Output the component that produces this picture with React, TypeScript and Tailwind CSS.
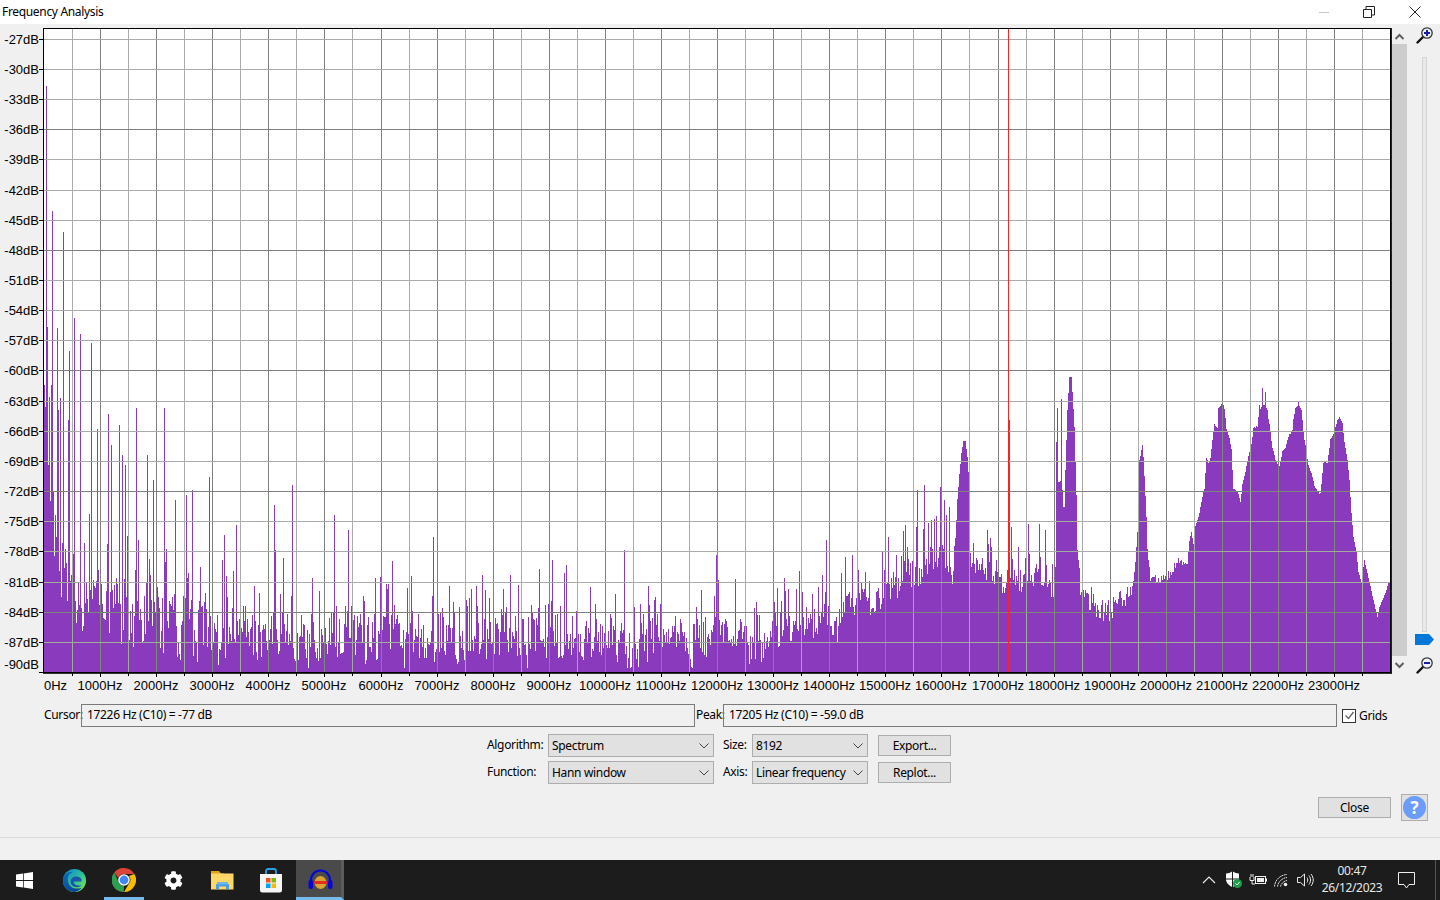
import React from "react";
import { FaCog } from "react-icons/fa";

const uiFont = "font-['Noto_Sans',sans-serif] tracking-[-0.33px]";

// envelope of the spectrum: x, top of the solid part, noise
const envelope: number[][] = [
  [44, 385, 0], [46, 420, 30], [50, 500, 50], [60, 575, 35], [80, 600, 25], [100, 610, 25], [150, 630, 28],
  [200, 640, 25], [300, 650, 22], [400, 640, 25], [500, 645, 22], [600, 648, 20], [700, 652, 15], [800, 640, 12],
  [840, 625, 12], [880, 595, 15], [900, 578, 18], [952, 575, 15], [955, 540, 4], [957, 500, 2], [959, 475, 1],
  [961, 452, 1], [963, 441, 0], [965, 441, 0], [967, 457, 1], [968, 472, 1], [969, 530, 2], [971, 568, 10],
  [1000, 580, 14], [1054, 582, 12], [1055, 567, 0], [1056, 442, 1], [1058, 482, 1], [1060, 480, 1], [1062, 490, 3],
  [1063, 507, 0], [1064, 507, 0], [1065, 470, 1], [1067, 410, 1], [1068, 393, 0], [1069, 377, 0], [1071, 377, 0],
  [1072, 392, 0], [1074, 427, 1], [1076, 495, 1], [1077, 550, 1], [1079, 568, 1], [1080, 592, 3], [1090, 598, 14],
  [1105, 612, 12], [1125, 598, 12], [1132, 587, 6], [1135, 563, 1], [1137, 532, 1], [1138, 500, 1], [1139, 460, 1],
  [1142, 445, 0], [1143, 457, 1], [1146, 517, 1], [1147, 550, 2], [1150, 580, 5], [1165, 578, 5], [1180, 560, 4],
  [1187, 565, 2], [1189, 540, 1], [1191, 532, 1], [1193, 545, 1], [1195, 525, 1], [1198, 517, 1], [1201, 502, 2],
  [1204, 488, 1], [1206, 458, 1], [1208, 462, 2], [1210, 458, 1], [1212, 440, 1], [1214, 424, 1], [1217, 428, 1],
  [1218, 408, 1], [1222, 403, 0], [1224, 408, 1], [1226, 428, 1], [1228, 435, 1], [1231, 448, 1], [1232, 470, 1],
  [1233, 488, 1], [1238, 493, 1], [1240, 502, 1], [1242, 485, 1], [1245, 472, 1], [1248, 457, 1], [1251, 445, 1],
  [1253, 428, 2], [1257, 427, 2], [1259, 408, 3], [1265, 405, 3], [1267, 410, 1], [1269, 425, 2], [1272, 448, 1],
  [1275, 460, 1], [1279, 467, 1], [1282, 452, 1], [1285, 448, 1], [1288, 437, 1], [1292, 428, 2], [1295, 408, 3],
  [1297, 403, 3], [1301, 410, 3], [1303, 433, 2], [1306, 452, 1], [1308, 465, 1], [1312, 477, 1], [1315, 490, 2],
  [1320, 493, 2], [1323, 462, 1], [1327, 463, 1], [1330, 440, 1], [1333, 435, 1], [1337, 420, 0], [1339, 417, 0],
  [1342, 423, 0], [1344, 442, 0], [1347, 460, 0], [1349, 480, 0], [1351, 513, 0], [1353, 537, 0], [1356, 552, 1],
  [1358, 572, 1], [1361, 583, 1], [1364, 560, 1], [1367, 573, 1], [1370, 587, 1], [1373, 600, 1], [1377, 617, 1],
  [1379, 607, 1], [1382, 600, 0], [1385, 593, 0], [1388, 583, 0], [1390, 583, 0],
];

// the tallest spikes, read off the picture
const spikes: Record<number, number> = {
  46: 86, 47: 327, 49: 397, 51: 385, 52: 211, 57: 328, 58: 410, 60: 398, 63: 232, 68: 420, 69: 351, 74: 318, 80: 334,
  91: 343, 97: 429, 108: 414, 111: 445, 119: 425, 122: 455, 125: 465, 136: 408, 147: 455, 153: 480, 164: 408,
  175: 500, 186: 495, 192: 490, 209: 477, 224: 535, 236: 525, 268: 493, 274: 505, 292: 485, 334: 515, 348: 530,
  433: 537, 552: 560, 624: 550, 716: 555, 826: 540, 905: 525, 917: 490, 924: 485, 931: 520, 940: 487, 946: 515,
  1009: 420, 1011: 527, 1028: 524, 1039: 524, 1045: 530,
  1057: 408, 1061: 399, 1262: 388, 1265: 392,
};

const buildBars = () => {
  let seed = 20231226;
  const rand = () => {
    seed = (seed + 0x6d2b79f5) | 0;
    let t = Math.imul(seed ^ (seed >>> 15), 1 | seed);
    t = (t + Math.imul(t ^ (t >>> 7), 61 | t)) ^ t;
    return ((t ^ (t >>> 14)) >>> 0) / 4294967296;
  };
  let d = "";
  let i = 0;
  let cluster = 0;
  let clusterEnd = 0;
  for (let x = 44; x < 1390; x++) {
    while (envelope[i + 1][0] <= x && i < envelope.length - 2) i++;
    const [x0, y0, a0] = envelope[i];
    const [x1, y1, a1] = envelope[i + 1];
    const k = Math.min(1, (x - x0) / (x1 - x0));
    const base = y0 + (y1 - y0) * k;
    const amp = a0 + (a1 - a0) * k;
    let top = base + (rand() - 0.5) * 2 * amp;
    if (x >= clusterEnd) {
      cluster = (rand() - 0.55) * 22;
      clusterEnd = x + 3 + Math.floor(rand() * 8);
    }
    // low end is ragged: clumps of bars with thin spikes above them
    if (x > 60 && x < 950) {
      top = base - 6 + (rand() - 0.5) * 2.2 * amp + cluster;
      if (rand() < 0.2) top -= 15 + rand() * (x < 300 ? 60 : 35);
    }
    if (x > 970 && x < 1054) {
      top += cluster * 0.6;
      if (rand() < 0.18) top -= 10 + rand() * 25;
    }
    if (spikes[x]) top = spikes[x];
    top = Math.min(668, Math.round(top));
    d += `M${x} ${top}h1V672h-1z`;
  }
  return d;
};

const bars = buildBars();

const dbTicks = [
  [-27, 39], [-30, 69], [-33, 99], [-36, 129], [-39, 159], [-42, 190], [-45, 220], [-48, 250], [-51, 280], [-54, 310],
  [-57, 340], [-60, 370], [-63, 401], [-66, 431], [-69, 461], [-72, 491], [-75, 521], [-78, 551], [-81, 582], [-84, 612],
  [-87, 642],
];
const isMajorDb = (db: number) => db % 12 === 0;
const hzLines = Array.from({ length: 47 }, (_, i) => i + 1).map((n) => ({ x: Math.round(44 + n * 28.045), major: n % 2 === 0, n }));

const Grid = ({ light, dark }: { light: string; dark: string }) => (
  <g shapeRendering="crispEdges">
    {hzLines.map((l) => (
      <line key={l.n} x1={l.x + 0.5} x2={l.x + 0.5} y1={29} y2={672} stroke={l.major ? dark : light} />
    ))}
    {dbTicks.map(([db, y]) => (
      <line key={db} x1={44} x2={1390} y1={y + 0.5} y2={y + 0.5} stroke={isMajorDb(db) ? dark : light} />
    ))}
  </g>
);

const Spectrum = () => (
  <svg width={1392} height={676} viewBox="0 24 1392 676" className="block shrink-0">
    <defs>
      <clipPath id="barsClip">
        <path d={bars} />
      </clipPath>
    </defs>
    <rect x={44} y={29} width={1346} height={643} fill="#fff" />
    <Grid light="#ababab" dark="#808080" />
    <path d={bars} fill="#8a3abd" shapeRendering="crispEdges" />
    {/* grid turns a little green where it runs over the purple */}
    <g clipPath="url(#barsClip)">
      <Grid light="#a3ab9c" dark="#7e8878" />
    </g>
    <line x1={1008.5} x2={1008.5} y1={29} y2={672} stroke="#ff2020" shapeRendering="crispEdges" />
    <g shapeRendering="crispEdges" stroke="#000">
      <rect x={43.5} y={28.5} width={1347} height={644} fill="none" />
      <line x1={1391} x2={1391} y1={28} y2={674} stroke="#222" />
      <line x1={43} x2={1391} y1={673.5} y2={673.5} stroke="#333" />
      {dbTicks.map(([db, y]) => (
        <line key={db} x1={39} x2={44} y1={y + 0.5} y2={y + 0.5} />
      ))}
      <line x1={39} x2={44} y1={672.5} y2={672.5} />
      {hzLines.map((l) => (
        <line key={l.n} x1={l.x + 0.5} x2={l.x + 0.5} y1={673} y2={l.major ? 677 : 676} />
      ))}
    </g>
    <g fontFamily="'Liberation Sans', Arial, sans-serif" fontSize={13} fill="#000" letterSpacing={0}>
      {dbTicks.map(([db, y]) => (
        <text key={db} x={39} y={y + 5} textAnchor="end">{db}dB</text>
      ))}
      <text x={39} y={669} textAnchor="end">-90dB</text>
      <text x={44} y={690}>0Hz</text>
      {Array.from({ length: 23 }, (_, i) => i + 1).map((k) => (
        <text key={k} x={Math.round(44 + k * 56.09)} y={690} textAnchor="middle">{k * 1000}Hz</text>
      ))}
    </g>
  </svg>
);

const Chevron = ({ dir }: { dir: "up" | "down" }) => (
  <svg width={15} height={16} viewBox="0 0 15 16" className="block">
    <path d={dir === "up" ? "M3.5 10 7.5 6l4 4" : "M3.5 6l4 4 4-4"} stroke="#606060" strokeWidth={2} fill="none" />
  </svg>
);

const Magnifier = ({ minus }: { minus?: boolean }) => (
  <svg width={18} height={18} viewBox="0 0 18 18" className="block">
    <path d="M1.5 16.5 7 11" stroke="#111" strokeWidth={2.4} strokeLinecap="round" />
    <circle cx={11} cy={7} r={5.2} fill="#eef0fb" stroke="#333" strokeWidth={1.3} />
    <rect x={8} y={6} width={6} height={2} fill="#1a1aa8" />
    {!minus && <rect x={10} y={4} width={2} height={6} fill="#1a1aa8" />}
  </svg>
);

const ComboBox = ({ value, className }: { value: string; className: string }) => (
  <div className={`flex h-[23px] items-center justify-between border border-[#adadad] bg-[#e1e1e1] pl-[3px] pr-[4px] ${className}`}>
    <span className="whitespace-nowrap text-[12px] leading-none text-black">{value}</span>
    <svg width={10} height={6} viewBox="0 0 10 6" className="shrink-0">
      <path d="M.5.5 5 5 9.500.500" stroke="#444" fill="none" />
    </svg>
  </div>
);

const PushButton = ({ label, className }: { label: string; className: string }) => (
  <div className={`flex items-center justify-center border border-[#adadad] bg-[#e1e1e1] text-[12px] leading-none text-black ${className}`}>
    {label}
  </div>
);

const ReadOut = ({ value, className }: { value: string; className: string }) => (
  <div className={`flex h-[23px] items-center border border-[#7a7a7a] pb-[2px] pl-[5px] text-[12px] leading-none text-black ${className}`}>
    {value}
  </div>
);

const WindowsLogo = () => (
  <svg width={17} height={17} viewBox="0 0 18 18">
    <path fill="#fff" d="M0 2.600 7.400 1.600v7H0zM8.200 1.500 18 0v8.600H8.200zM0 9.400h7.400v7L0 15.400zM8.200 9.400H18V18L8.200 16.500z" />
  </svg>
);

const EdgeLogo = () => (
  <svg width={25} height={25} viewBox="0 0 26 26">
    <defs>
      <linearGradient id="edgeGreen" x1="0.2" y1="0" x2="1" y2="0.8">
        <stop offset="0" stopColor="#0f8ccf" />
        <stop offset="0.55" stopColor="#2fc29a" />
        <stop offset="1" stopColor="#7de05a" />
      </linearGradient>
      <linearGradient id="edgeBlue" x1="0" y1="0" x2="0.8" y2="1">
        <stop offset="0" stopColor="#0c6fb8" />
        <stop offset="1" stopColor="#0a3f8c" />
      </linearGradient>
    </defs>
    <circle cx={13} cy={13} r={12} fill="url(#edgeGreen)" />
    <path fill="url(#edgeBlue)" d="M1 13C1 7 6 3 11 4.500 6.500 6 5 10 6.500 15c1.500 5 7 8 14 5.500C17.500 24 14 25 13 25 6 25 1 20 1 13z" />
    <path fill="#1a56a5" d="M9 14c0-4 4-6 8-5 3 1 4 3 3 5h-8c0 3 3 5 9 4-3 3-12 3-12-4z" />
  </svg>
);

const ChromeLogo = () => (
  <svg width={24} height={24} viewBox="0 0 24 24">
    <path fill="#db4437" d="M12 0a12 12 0 0 1 10.400 6H12a6 6 0 0 0-5.700 4L2.300 4.400A12 12 0 0 1 12 0z" />
    <path fill="#fbbc05" d="M22.400 6A12 12 0 0 1 12 24l5-8.500A6 6 0 0 0 17 8z" />
    <path fill="#2f9e4f" d="M2.300 4.400 7.200 15.500A6 6 0 0 0 12 18l-.2 6A12 12 0 0 1 2.300 4.400z" />
    <circle cx={12} cy={12} r={5.800} fill="#fff" />
    <circle cx={12} cy={12} r={4.400} fill="#4285f4" />
  </svg>
);

const FolderLogo = () => (
  <svg width={23} height={20} viewBox="0 0 23 20">
    <path fill="#e0a21c" d="M0 1h8l2 2.500h3V6H0z" />
    <rect y={3.500} width={22.500} height={16} fill="#ffd768" />
    <path fill="#4a9fe0" d="M5 14h13v5h-3v-2.500H8V19H5z" />
    <rect x={6} y={12} width={11} height={2.500} fill="#6fb6ea" />
  </svg>
);

const StoreLogo = () => (
  <svg width={24} height={25} viewBox="0 0 24 25">
    <path d="M7 7V3a2 2 0 0 1 2-2h6a2 2 0 0 1 2 2v4" stroke="#2aa0e6" strokeWidth={1.800} fill="none" />
    <path fill="#f5f5f5" d="M1 6h22v16a2.500 2.500 0 0 1-2.500 2.500h-17A2.500 2.500 0 0 1 1 22z" />
    <rect x={7} y={10} width={4.500} height={4.500} fill="#f25022" />
    <rect x={12.500} y={10} width={4.500} height={4.500} fill="#7fba00" />
    <rect x={7} y={15.500} width={4.500} height={4.500} fill="#00a4ef" />
    <rect x={12.500} y={15.500} width={4.500} height={4.500} fill="#ffb900" />
  </svg>
);

const AudacityLogo = () => (
  <svg width={25} height={22} viewBox="0 0 25 22">
    <path d="M3 14V11a9.500 9.500 0 0 1 19 0v3" stroke="#0505d8" strokeWidth={2.200} fill="none" />
    <rect x={.5} y={11} width={4.500} height={9} rx={2} fill="#0505d8" />
    <rect x={20} y={11} width={4.500} height={9} rx={2} fill="#0505d8" />
    <ellipse cx={12.500} cy={13.500} rx={6} ry={6.500} fill="#d9a233" />
    <path d="M6 13.500h13" stroke="#e0301a" strokeWidth={3} />
  </svg>
);

const TrayIcons = () => (
  <div className="flex items-center">
    <svg width={16} height={16} viewBox="0 0 16 16" className="mr-[8px]">
      <path d="M2 11 8 5l6 6" stroke="#e8e8e8" strokeWidth={1.200} fill="none" />
    </svg>
    <svg width={18} height={18} viewBox="0 0 18 18" className="mr-[6px]">
      <path fill="#fff" d="M1 2.500C4 2.500 6 1.500 7.500 0 9 1.500 11 2.500 14 2.500V8c0 4-3 6.500-6.500 8C4 14.500 1 12 1 8z" />
      <path d="M7.500 0v16M1 8h13" stroke="#1c1c1c" />
      <circle cx={12.500} cy={12.500} r={4.500} fill="#1e9e4a" />
      <path d="M10.500 12.500l1.500 1.500 2.500-3" stroke="#fff" fill="none" />
    </svg>
    <svg width={18} height={12} viewBox="0 0 18 12" className="mr-[7px]">
      <path d="M1 3v3.500h4V3M3 6.500V10h3M2 0v3M4 0v3" stroke="#eee" fill="none" />
      <rect x={6.500} y={2.500} width={10} height={7} stroke="#eee" fill="none" />
      <rect x={8} y={4} width={7} height={4} fill="#eee" />
      <rect x={17} y={4.500} width={1} height={3} fill="#eee" />
    </svg>
    <svg width={15} height={14} viewBox="0 0 15 14" className="mr-[8px]">
      <path d="M.5 13.500C1 7 6 2 13 1.500M3.500 13.500C4 9 8 5 13 4.500M6.500 13.500C7 11 9.500 8 13 7.500" stroke="#ddd" strokeDasharray="2 .6" fill="none" />
      <circle cx={11.500} cy={11.500} r={1.800} fill="#eee" />
    </svg>
    <svg width={17} height={14} viewBox="0 0 17 14">
      <path d="M.5 4.500h3L7.500 1v12l-4-3.500h-3z" stroke="#e8e8e8" fill="none" />
      <path d="M10 4.500c1 1.500 1 3.500 0 5M12 2.500c2 3 2 6 0 9M14 1c3 4 3 8 0 12" stroke="#e8e8e8" fill="none" />
    </svg>
  </div>
);

export default function App() {
  return (
    <div className={`flex h-[900px] w-[1440px] flex-col overflow-hidden bg-[#f0f0f0] ${uiFont}`}>
      {/* title bar */}
      <div className="flex h-6 shrink-0 items-center justify-between bg-white pl-[2px]">
        <span className="text-[12px] leading-none text-black">Frequency Analysis</span>
        <div className="flex items-center">
          <div className="mr-[34px] h-px w-[10px] bg-[#c8c8c8]" />
          <svg width={12} height={12} viewBox="0 0 12 12" className="mr-[34px]">
            <path d="M.5 3.500h8v8h-8zM3 3V.5h8.500V9H9" stroke="#222" fill="none" />
          </svg>
          <svg width={12} height={12} viewBox="0 0 12 12" className="mr-[19px]">
            <path d="M.5.500l11 11M11.500.500l-11 11" stroke="#222" fill="none" />
          </svg>
        </div>
      </div>

      {/* plot with scrollbar and zoom slider */}
      <div className="flex h-[676px] shrink-0">
        <Spectrum />
        <div className="mt-[4px] flex h-[652px] w-[15px] flex-col">
          <div className="h-4 shrink-0 pt-px"><Chevron dir="up" /></div>
          <div className="h-[612px] bg-[#cdcdcd]" />
          <div className="mt-px h-4 shrink-0"><Chevron dir="down" /></div>
        </div>
        <div className="flex flex-1 flex-col items-center pl-[2px] pt-[2px]">
          <Magnifier />
          <div className="mb-[2px] mt-[13px] h-[575px] w-[5px] border border-[#d4d4d4] bg-[#e7eae7]" />
          <svg width={19} height={11} viewBox="0 0 19 11" className="block shrink-0">
            <path fill="#0078d7" d="M0 0h14l5 5.500L14 11H0z" />
          </svg>
          <div className="mt-[11px]"><Magnifier minus /></div>
        </div>
      </div>

      {/* cursor and peak readouts */}
      <div className="mt-[4px] flex h-[23px] shrink-0 items-center pl-[44px] text-[12px] leading-none text-black">
        <span className="w-[37px] pb-[2px]">Cursor:</span>
        <ReadOut value="17226 Hz (C10) = -77 dB" className="w-[614px]" />
        <span className="w-[28px] pb-[2px] pl-[1px]">Peak:</span>
        <ReadOut value="17205 Hz (C10) = -59.0 dB" className="w-[614px]" />
        <div className="ml-[5px] flex h-[14px] w-[14px] items-center justify-center border border-[#333] bg-white">
          <svg width={11} height={11} viewBox="0 0 11 11">
            <path d="M1.500 5.500 4.500 8.500 9.500 2" stroke="#666" strokeWidth={1.400} fill="none" />
          </svg>
        </div>
        <span className="ml-[3px]">Grids</span>
      </div>

      {/* algorithm, size, function, axis */}
      <div className="mt-[7px] flex shrink-0 flex-col gap-[4px] pl-[487px] text-[12px] leading-none text-black">
        <div className="flex h-[23px] items-center">
          <span className="w-[61px] pb-[2px]">Algorithm:</span>
          <ComboBox value="Spectrum" className="w-[166px]" />
          <span className="ml-[9px] w-[29px] pb-[2px]">Size:</span>
          <ComboBox value="8192" className="w-[116px]" />
          <PushButton label="Export..." className="ml-[10px] h-[21px] w-[73px]" />
        </div>
        <div className="flex h-[23px] items-center">
          <span className="w-[61px] pb-[2px]">Function:</span>
          <ComboBox value="Hann window" className="w-[166px]" />
          <span className="ml-[9px] w-[29px] pb-[2px]">Axis:</span>
          <ComboBox value="Linear frequency" className="w-[116px]" />
          <PushButton label="Replot..." className="ml-[10px] h-[21px] w-[73px]" />
        </div>
      </div>

      {/* close and help */}
      <div className="mt-[10px] flex h-[27px] shrink-0 items-center justify-end pr-[12px]">
        <PushButton label="Close" className="h-[21px] w-[73px]" />
        <div className="ml-[10px] flex h-[27px] w-[27px] items-center justify-center border border-[#adadad] bg-[#e1e1e1]">
          <div className="flex h-[23px] w-[23px] items-center justify-center rounded-full bg-[#6c9cf9] text-[17px] font-bold leading-none text-white">?</div>
        </div>
      </div>

      {/* status strip */}
      <div className="mt-[16px] h-[23px] shrink-0 border-t border-[#d9d9d9] bg-[#f1f1f1]" />

      {/* taskbar */}
      <div className="flex h-10 shrink-0 items-stretch bg-[#1c1c1c]">
        <div className="flex w-[48px] items-center justify-center"><WindowsLogo /></div>
        <div className="flex w-[52px] items-center justify-center"><EdgeLogo /></div>
        <div className="mx-[4px] flex w-[40px] items-center justify-center border-b-[3px] border-[#76b9ed] pt-[3px]"><ChromeLogo /></div>
        <div className="flex w-[50px] items-center justify-center"><FaCog className="text-[19px] text-white" /></div>
        <div className="flex w-[48px] items-center justify-center"><FolderLogo /></div>
        <div className="flex w-[50px] items-center justify-center"><StoreLogo /></div>
        <div className="flex w-[48px] items-center justify-center border-b-[3px] border-r-[3px] border-b-[#76b9ed] border-r-[#5c5c5c] bg-[#4a4a4a] pt-[3px] pl-[3px]"><AudacityLogo /></div>
        <div className="flex flex-1 items-center justify-end">
          <TrayIcons />
          <div className="ml-[3px] flex w-[70px] flex-col items-center gap-[3px] pb-px text-[12px] leading-[14px] text-[#e8e8e8]">
            <span>00:47</span>
            <span>26/12/2023</span>
          </div>
          <svg width={18} height={17} viewBox="0 0 18 17" className="ml-[11px] mr-[19px]">
            <path d="M.5.5h16v12h-5.500L8.500 16 6 12.500H.5z" stroke="#eee" fill="none" />
          </svg>
          <div className="mr-[4px] h-full w-px bg-[#555]" />
        </div>
      </div>
    </div>
  );
}
